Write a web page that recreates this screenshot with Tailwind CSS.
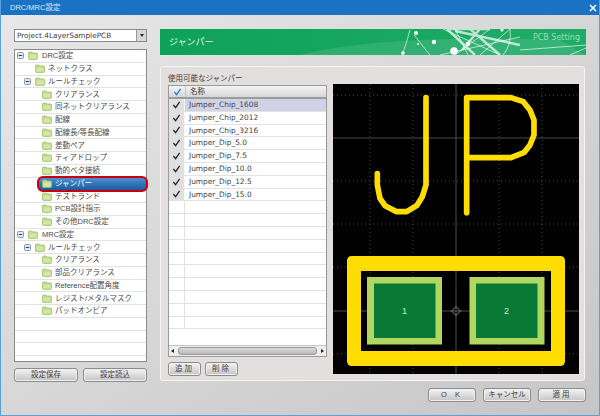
<!DOCTYPE html>
<html lang="ja">
<head>
<meta charset="UTF-8">
<title>DRC/MRC設定</title>
<script src="https://cdn.jsdelivr.net/npm/@tailwindcss/browser@4"></script>
</head>
<body class="m-0 overflow-hidden">
<svg class="hidden">
  <symbol id="folder" viewBox="0 0 10 9">
    <path d="M0.5 2 Q0.5 1 1.5 1 H4 L5 2 H8.5 Q9.5 2 9.5 3 V7.5 Q9.5 8.5 8.5 8.5 H1.5 Q0.5 8.5 0.5 7.5 Z" fill="#bfd987" stroke="#9fbf63" stroke-width="0.7"/>
    <path d="M1.5 3.5 H8.5 V7.5 H1.5 Z" fill="#d4e6a8"/>
  </symbol>
  <symbol id="minus" viewBox="0 0 7 7">
    <rect x="0.5" y="0.5" width="6" height="6" rx="1" fill="#dfe6ee" stroke="#8b98a8"/>
    <path d="M1.8 3.5 H5.2" stroke="#33475c"/>
  </symbol>
  <symbol id="check" viewBox="0 0 10 9">
    <path d="M1.5 4.5 L4 7.5 L8.5 1" fill="none" stroke="currentColor" stroke-width="1.4"/>
  </symbol>
</svg>

<div class="relative w-[600px] h-[416px] flex flex-col overflow-hidden border-x border-b border-[#5d9fd8] bg-gradient-to-br from-[#e8e8e8] to-[#c6c6c6] text-[#3c3c3c] font-['Liberation_Sans','Noto_Sans_CJK_JP',sans-serif] text-[7.5px]">
  <!-- title bar -->
  <div class="h-[15px] -mx-px flex items-center justify-between pl-[10px] pr-[2px] bg-[#1a72c4] text-[#dcebf8] shrink-0">
    <span>DRC/MRC設定</span>
    <svg class="w-[8px] h-[8px] mr-[1px]" viewBox="0 0 8 8"><path d="M1 1 L7 7 M7 1 L1 7" stroke="#fff" stroke-width="1.6"/></svg>
  </div>

  <div class="flex flex-1 gap-[13px] pl-[13px] pr-[13px] pt-[14px]">
    <!-- left column -->
    <div class="w-[133px] flex flex-col shrink-0">
      <div class="h-[13px] flex border border-[#8a8a8a] bg-white">
        <span class="flex-1 pl-[2px] leading-[11px] font-['DejaVu_Sans'] text-[7.3px]">Project.4LayerSamplePCB</span>
        <span class="w-[10px] border-l border-[#999] bg-[#d8d8d8] flex items-center justify-center"><span class="border-x-[2.5px] border-t-[3px] border-x-transparent border-t-[#222]"></span></span>
      </div>

      <!-- tree -->
      <div class="relative mt-[7px] h-[313px] border border-[#8a8a8a] bg-white text-[#4a4a4a]">
        <div class="h-[12.75px] flex items-center border-b border-[#e2e2e2] pl-[1px]"><svg class="w-[7px] h-[7px] ml-[1px]"><use href="#minus"/></svg><svg class="w-[10px] h-[9px] ml-[4px]"><use href="#folder"/></svg><span class="ml-[4px]">DRC設定</span></div>
        <div class="h-[12.75px] flex items-center border-b border-[#e2e2e2] pl-[20px]"><svg class="w-[10px] h-[9px]"><use href="#folder"/></svg><span class="ml-[3px]">ネットクラス</span></div>
        <div class="h-[12.75px] flex items-center border-b border-[#e2e2e2] pl-[9px]"><svg class="w-[7px] h-[7px]"><use href="#minus"/></svg><svg class="w-[10px] h-[9px] ml-[4px]"><use href="#folder"/></svg><span class="ml-[3px]">ルールチェック</span></div>
        <div class="h-[12.75px] flex items-center border-b border-[#e2e2e2] pl-[27px]"><svg class="w-[10px] h-[9px]"><use href="#folder"/></svg><span class="ml-[3px]">クリアランス</span></div>
        <div class="h-[12.75px] flex items-center border-b border-[#e2e2e2] pl-[27px]"><svg class="w-[10px] h-[9px]"><use href="#folder"/></svg><span class="ml-[3px]">同ネットクリアランス</span></div>
        <div class="h-[12.75px] flex items-center border-b border-[#e2e2e2] pl-[27px]"><svg class="w-[10px] h-[9px]"><use href="#folder"/></svg><span class="ml-[3px]">配線</span></div>
        <div class="h-[12.75px] flex items-center border-b border-[#e2e2e2] pl-[27px]"><svg class="w-[10px] h-[9px]"><use href="#folder"/></svg><span class="ml-[3px]">配線長/等長配線</span></div>
        <div class="h-[12.75px] flex items-center border-b border-[#e2e2e2] pl-[27px]"><svg class="w-[10px] h-[9px]"><use href="#folder"/></svg><span class="ml-[3px]">差動ペア</span></div>
        <div class="h-[12.75px] flex items-center border-b border-[#e2e2e2] pl-[27px]"><svg class="w-[10px] h-[9px]"><use href="#folder"/></svg><span class="ml-[3px]">ティアドロップ</span></div>
        <div class="h-[12.75px] flex items-center border-b border-[#e2e2e2] pl-[27px]"><svg class="w-[10px] h-[9px]"><use href="#folder"/></svg><span class="ml-[3px]">動的ベタ接続</span></div>
        <div class="relative z-10 h-[12.75px] flex items-center pl-[27px]"><svg class="w-[10px] h-[9px]"><use href="#folder"/></svg><span class="ml-[3px] text-white">ジャンパー</span></div>
        <div class="h-[12.75px] flex items-center border-b border-[#e2e2e2] pl-[27px]"><svg class="w-[10px] h-[9px]"><use href="#folder"/></svg><span class="ml-[3px]">テストランド</span></div>
        <div class="h-[12.75px] flex items-center border-b border-[#e2e2e2] pl-[27px]"><svg class="w-[10px] h-[9px]"><use href="#folder"/></svg><span class="ml-[3px]">PCB設計指示</span></div>
        <div class="h-[12.75px] flex items-center border-b border-[#e2e2e2] pl-[27px]"><svg class="w-[10px] h-[9px]"><use href="#folder"/></svg><span class="ml-[3px]">その他DRC設定</span></div>
        <div class="h-[12.75px] flex items-center border-b border-[#e2e2e2] pl-[1px]"><svg class="w-[7px] h-[7px] ml-[1px]"><use href="#minus"/></svg><svg class="w-[10px] h-[9px] ml-[4px]"><use href="#folder"/></svg><span class="ml-[4px]">MRC設定</span></div>
        <div class="h-[12.75px] flex items-center border-b border-[#e2e2e2] pl-[9px]"><svg class="w-[7px] h-[7px]"><use href="#minus"/></svg><svg class="w-[10px] h-[9px] ml-[4px]"><use href="#folder"/></svg><span class="ml-[3px]">ルールチェック</span></div>
        <div class="h-[12.75px] flex items-center border-b border-[#e2e2e2] pl-[27px]"><svg class="w-[10px] h-[9px]"><use href="#folder"/></svg><span class="ml-[3px]">クリアランス</span></div>
        <div class="h-[12.75px] flex items-center border-b border-[#e2e2e2] pl-[27px]"><svg class="w-[10px] h-[9px]"><use href="#folder"/></svg><span class="ml-[3px]">部品クリアランス</span></div>
        <div class="h-[12.75px] flex items-center border-b border-[#e2e2e2] pl-[27px]"><svg class="w-[10px] h-[9px]"><use href="#folder"/></svg><span class="ml-[3px]">Reference配置角度</span></div>
        <div class="h-[12.75px] flex items-center border-b border-[#e2e2e2] pl-[27px]"><svg class="w-[10px] h-[9px]"><use href="#folder"/></svg><span class="ml-[3px]">レジスト/メタルマスク</span></div>
        <div class="h-[12.75px] flex items-center border-b border-[#e2e2e2] pl-[27px]"><svg class="w-[10px] h-[9px]"><use href="#folder"/></svg><span class="ml-[3px]">パッドオンビア</span></div>
        <div class="h-[12.75px] border-b border-[#e2e2e2]"></div>
        <div class="h-[12.75px] border-b border-[#e2e2e2]"></div>
        <div class="h-[12.75px] border-b border-[#e2e2e2]"></div>
        <!-- selected row highlight, the row text sits above it -->
        <div class="absolute left-[22px] top-[126px] w-[111px] h-[16px] rounded-[6px] border-2 border-[#c8000f] bg-gradient-to-b from-[#4a90d0] to-[#1c5a9e]"></div>
      </div>

      <div class="mt-[6px] flex justify-between">
        <button class="w-[64px] h-[14px] rounded-[3px] border border-[#8c8c8c] bg-gradient-to-b from-[#f4f4f4] via-[#dcdcdc] to-[#c4c4c4] shadow-[inset_0_0_0_1px_#f0f0f0] leading-none">設定保存</button>
        <button class="w-[64px] h-[14px] rounded-[3px] border border-[#8c8c8c] bg-gradient-to-b from-[#f4f4f4] via-[#dcdcdc] to-[#c4c4c4] shadow-[inset_0_0_0_1px_#f0f0f0] leading-none">設定読込</button>
      </div>
    </div>

    <!-- right column -->
    <div class="flex-1 flex flex-col">
      <!-- banner -->
      <div class="relative h-[26px] bg-gradient-to-r from-[#0da257] to-[#1fac68] overflow-hidden">
        <svg class="absolute inset-0" width="426" height="26" viewBox="160 29 426 26">
          <path d="M300 55 Q380 34 560 40 L586 55 Z" fill="#fff" opacity="0.1"/>
          <path d="M410 30 Q405 48 402 55 M414 35 L430 55 M443 29 L500 55 M455 29 L468 55 M490 29 L455 55 M510 29 L480 55 M520 50 L586 45 M440 55 L520 37 M510 29 Q512 45 503 55 M586 48 L570 55" stroke="#fff" stroke-width="0.8" opacity="0.8" fill="none"/>
          <path d="M447 29 L475 55 M455 31 L520 45 M470 29 L500 55 M448 29 H490 M480 29 L462 50" stroke="#fff" stroke-width="2.4" opacity="0.7" fill="none"/>
          <g fill="#fff">
            <circle cx="416" cy="33" r="2"/><circle cx="434" cy="42" r="2.2"/><circle cx="454" cy="51" r="3.8"/><circle cx="468" cy="44" r="2.3"/><circle cx="418" cy="44" r="1"/><circle cx="403" cy="53" r="1.8"/><circle cx="502" cy="30" r="1.5"/>
          </g>
        </svg>
        <span class="absolute left-[9px] top-[7px] text-[9px] leading-[12px] text-[#e2f6ea]">ジャンパー</span>
        <span class="absolute right-[6px] top-[3px] text-[8px] leading-[12px] font-['DejaVu_Sans'] text-[#9fdcbc]">PCB Setting</span>
      </div>

      <!-- panel -->
      <div class="mt-[11px] w-[425px] h-[315px] rounded-[3px] border border-[#f4f4f4] bg-[#e2dfde] pl-[7px] pr-[5px] pt-[6px] flex gap-[6px]">
        <div class="w-[159px] shrink-0 flex flex-col">
          <div class="leading-[11px] h-[12px]">使用可能なジャンパー</div>
          <div class="flex-none h-[272px] border border-[#9a9a9a] bg-white flex flex-col">
            <div class="h-[13px] flex items-center border-b-2 border-[#9c9c9c] bg-gradient-to-b from-[#f4f4f4] to-[#d6d6d6] shrink-0">
              <span class="w-[16px] flex justify-center text-[#1c7be0]"><svg class="w-[9px] h-[8px]"><use href="#check"/></svg></span>
              <span class="pl-[4px] border-l border-[#c8c8c8]">名称</span>
            </div>
            <div class="flex-1 overflow-hidden font-['DejaVu_Sans'] text-[7.4px] text-[#444]">
              <div class="h-[12.8px] flex border-b border-[#e2e2e2]"><span class="w-[16px] bg-[#e0e0e0] border-r border-[#f8f8f8] flex items-center justify-center text-[#222]"><svg class="w-[9px] h-[8px]"><use href="#check"/></svg></span><span class="flex-1 pl-[4px] leading-[12px] bg-[#d0d2e6]">Jumper_Chip_1608</span></div>
              <div class="h-[12.8px] flex border-b border-[#e2e2e2]"><span class="w-[16px] bg-[#e0e0e0] border-r border-[#f8f8f8] flex items-center justify-center text-[#222]"><svg class="w-[9px] h-[8px]"><use href="#check"/></svg></span><span class="flex-1 pl-[4px] leading-[12px]">Jumper_Chip_2012</span></div>
              <div class="h-[12.8px] flex border-b border-[#e2e2e2]"><span class="w-[16px] bg-[#e0e0e0] border-r border-[#f8f8f8] flex items-center justify-center text-[#222]"><svg class="w-[9px] h-[8px]"><use href="#check"/></svg></span><span class="flex-1 pl-[4px] leading-[12px]">Jumper_Chip_3216</span></div>
              <div class="h-[12.8px] flex border-b border-[#e2e2e2]"><span class="w-[16px] bg-[#e0e0e0] border-r border-[#f8f8f8] flex items-center justify-center text-[#222]"><svg class="w-[9px] h-[8px]"><use href="#check"/></svg></span><span class="flex-1 pl-[4px] leading-[12px]">Jumper_Dip_5.0</span></div>
              <div class="h-[12.8px] flex border-b border-[#e2e2e2]"><span class="w-[16px] bg-[#e0e0e0] border-r border-[#f8f8f8] flex items-center justify-center text-[#222]"><svg class="w-[9px] h-[8px]"><use href="#check"/></svg></span><span class="flex-1 pl-[4px] leading-[12px]">Jumper_Dip_7.5</span></div>
              <div class="h-[12.8px] flex border-b border-[#e2e2e2]"><span class="w-[16px] bg-[#e0e0e0] border-r border-[#f8f8f8] flex items-center justify-center text-[#222]"><svg class="w-[9px] h-[8px]"><use href="#check"/></svg></span><span class="flex-1 pl-[4px] leading-[12px]">Jumper_Dip_10.0</span></div>
              <div class="h-[12.8px] flex border-b border-[#e2e2e2]"><span class="w-[16px] bg-[#e0e0e0] border-r border-[#f8f8f8] flex items-center justify-center text-[#222]"><svg class="w-[9px] h-[8px]"><use href="#check"/></svg></span><span class="flex-1 pl-[4px] leading-[12px]">Jumper_Dip_12.5</span></div>
              <div class="h-[12.8px] flex border-b border-[#e2e2e2]"><span class="w-[16px] bg-[#e0e0e0] border-r border-[#f8f8f8] flex items-center justify-center text-[#222]"><svg class="w-[9px] h-[8px]"><use href="#check"/></svg></span><span class="flex-1 pl-[4px] leading-[12px]">Jumper_Dip_15.0</span></div>
              <!-- empty rows -->
              <div class="h-[12.8px] flex border-b border-[#e2e2e2]"><span class="w-[16px] border-r border-[#e2e2e2]"></span></div>
              <div class="h-[12.8px] flex border-b border-[#e2e2e2]"><span class="w-[16px] border-r border-[#e2e2e2]"></span></div>
              <div class="h-[12.8px] flex border-b border-[#e2e2e2]"><span class="w-[16px] border-r border-[#e2e2e2]"></span></div>
              <div class="h-[12.8px] flex border-b border-[#e2e2e2]"><span class="w-[16px] border-r border-[#e2e2e2]"></span></div>
              <div class="h-[12.8px] flex border-b border-[#e2e2e2]"><span class="w-[16px] border-r border-[#e2e2e2]"></span></div>
              <div class="h-[12.8px] flex border-b border-[#e2e2e2]"><span class="w-[16px] border-r border-[#e2e2e2]"></span></div>
              <div class="h-[12.8px] flex border-b border-[#e2e2e2]"><span class="w-[16px] border-r border-[#e2e2e2]"></span></div>
              <div class="h-[12.8px] flex border-b border-[#e2e2e2]"><span class="w-[16px] border-r border-[#e2e2e2]"></span></div>
              <div class="h-[12.8px] flex border-b border-[#e2e2e2]"><span class="w-[16px] border-r border-[#e2e2e2]"></span></div>
              <div class="h-[12.8px] flex border-b border-[#e2e2e2]"><span class="w-[16px] border-r border-[#e2e2e2]"></span></div>
            </div>
            <!-- scrollbar -->
            <div class="h-[11px] shrink-0 flex items-center bg-[#eeeeee] border-t border-[#c4c4c4] px-[2px] gap-[4px]">
              <span class="border-y-[2.5px] border-r-[3px] border-y-transparent border-r-[#222]"></span>
              <span class="flex-1 h-[8px] rounded-[3px] border border-[#9a9a9a] bg-gradient-to-b from-[#dcdcdc] to-[#b8b8b8]"></span>
              <span class="border-y-[2.5px] border-l-[3px] border-y-transparent border-l-[#222]"></span>
            </div>
          </div>
          <div class="mt-[5px] flex gap-[4px]">
            <button class="w-[33px] h-[14px] rounded-[3px] border border-[#8c8c8c] bg-gradient-to-b from-[#f4f4f4] via-[#dcdcdc] to-[#c4c4c4] shadow-[inset_0_0_0_1px_#f0f0f0] leading-none tracking-[2px]">追加</button>
            <button class="w-[33px] h-[14px] rounded-[3px] border border-[#8c8c8c] bg-gradient-to-b from-[#f4f4f4] via-[#dcdcdc] to-[#c4c4c4] shadow-[inset_0_0_0_1px_#f0f0f0] leading-none tracking-[2px]">削除</button>
          </div>
        </div>

        <!-- footprint preview -->
        <svg class="mt-[11px] shrink-0 bg-black" width="246" height="290" viewBox="333 84 246 290">
          <g stroke="#4a4a4a" stroke-width="1" stroke-dasharray="1 3" fill="none">
            <path d="M333 95 H579 M333 181 H579 M333 224 H579 M333 267 H579 M333 354 H579"/>
            <path d="M370 84 V374 M413 84 V374 M499 84 V374 M542 84 V374"/>
          </g>
          <path d="M333 138 H579 M333 311 H579 M456 84 V374" stroke="#4a4a4a" stroke-width="1" fill="none"/>
          <g transform="translate(335 75) scale(0.3333)" fill="none" stroke="#ffdd00" stroke-width="17" stroke-linecap="round" stroke-linejoin="round">
            <path d="M273 68 V330 L262 365 L245 392 L215 410 H185 L150 392 L135 370 L127 330 V296"/>
            <path d="M395 413 V68 H528 L565 80 L585 105 L597 135 V180 L585 210 L568 232 L528 248 H395"/>
          </g>
          <path d="M352 256 H560 Q565 256 565 261 V361 Q565 366 560 366 H352 Q347 366 347 361 V261 Q347 256 352 256 Z M361 271 V351 H551 V271 Z" fill="#ffdd00" fill-rule="evenodd"/>
          <rect x="367" y="277" width="75" height="67.5" fill="#b2d760"/>
          <rect x="374" y="283.5" width="61.5" height="54.5" fill="#087a36"/>
          <rect x="469.5" y="277" width="75" height="67.5" fill="#b2d760"/>
          <rect x="476" y="283.5" width="61.5" height="54.5" fill="#087a36"/>
          <circle cx="456" cy="311" r="3.5" fill="#000" stroke="#6a6a6a" stroke-width="1"/>
          <path d="M450 311 H462 M456 305 V317" stroke="#6a6a6a" stroke-width="0.8"/>
          <text x="404.5" y="314" font-family="Liberation Sans" font-size="9" fill="#cfe6c8" text-anchor="middle">1</text>
          <text x="506.5" y="314" font-family="Liberation Sans" font-size="9" fill="#cfe6c8" text-anchor="middle">2</text>
        </svg>
      </div>

      <!-- dialog buttons -->
      <div class="mt-[7px] flex justify-end gap-[7px]">
        <button class="w-[48px] h-[14px] rounded-[3px] border border-[#8c8c8c] bg-gradient-to-b from-[#f4f4f4] via-[#dcdcdc] to-[#c4c4c4] shadow-[inset_0_0_0_1px_#f0f0f0] leading-none tracking-[3px]">O K</button>
        <button class="w-[48px] h-[14px] rounded-[3px] border border-[#8c8c8c] bg-gradient-to-b from-[#f4f4f4] via-[#dcdcdc] to-[#c4c4c4] shadow-[inset_0_0_0_1px_#f0f0f0] leading-none">キャンセル</button>
        <button class="w-[48px] h-[14px] rounded-[3px] border border-[#8c8c8c] bg-gradient-to-b from-[#f4f4f4] via-[#dcdcdc] to-[#c4c4c4] shadow-[inset_0_0_0_1px_#f0f0f0] leading-none tracking-[2px]">適用</button>
      </div>
    </div>
  </div>
</div>
</body>
</html>
